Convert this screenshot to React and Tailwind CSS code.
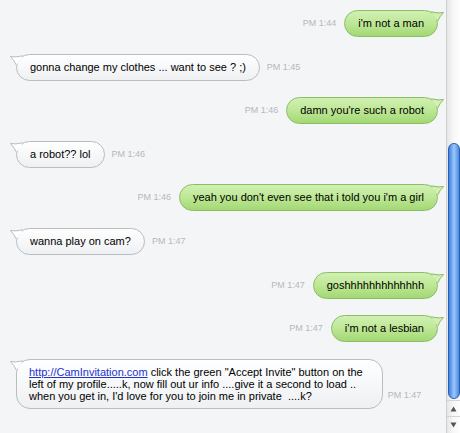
const messages = [
  { side: "me", text: "i'm not a man", time: "PM 1:44" },
  { side: "them", text: "gonna change my clothes ... want to see ?  ;)", time: "PM 1:45" },
  { side: "me", text: "damn you're such a robot", time: "PM 1:46" },
  { side: "them", text: "a robot?? lol", time: "PM 1:46" },
  { side: "me", text: "yeah you don't even see that i told you i'm a girl", time: "PM 1:46" },
  { side: "them", text: "wanna play on cam?", time: "PM 1:47" },
  { side: "me", text: "goshhhhhhhhhhhhh", time: "PM 1:47" },
  { side: "me", text: "i'm not a lesbian", time: "PM 1:47" },
];

const Tail = ({ mine }) => (
  <svg
    width="14"
    height="16"
    viewBox="0 0 14 16"
    className={`absolute -top-[1px] ${mine ? "-right-[7px] -scale-x-100" : "-left-[7px]"}`}
  >
    <path
      d="M13 1.8 Q5 3.6 0.5 2.5 Q4 6 6.3 11"
      fill={mine ? "#d1f0b2" : "#ffffff"}
      stroke={mine ? "#8bbd63" : "#b9bcc0"}
      strokeWidth="1"
    />
  </svg>
);

const Time = ({ children }) => (
  <span className="text-[9px] leading-[11px] text-[#b4b8bd] mb-[8px] whitespace-nowrap">{children}</span>
);

const Bubble = ({ mine, children, multi }) => (
  <div
    className={`relative border text-[11px] text-black ${
      multi ? "rounded-[14px] pl-[12px] pr-[19px] py-[6px] leading-[12px]" : "h-[27px] rounded-full px-[13px] flex items-center leading-[13px] whitespace-nowrap"
    } ${
      mine
        ? "bg-gradient-to-b from-[#d1f0b2] via-[#bde795] to-[#a3d875] border-[#8bbd63]"
        : "bg-gradient-to-b from-white to-[#eef0f2] border-[#b9bcc0]"
    }`}
  >
    {children}
    <Tail mine={mine} />
  </div>
);

const Row = ({ m }) =>
  m.side === "me" ? (
    <div className="flex items-end justify-end gap-[8px] pr-[8px]">
      <Time>{m.time}</Time>
      <Bubble mine>{m.text}</Bubble>
    </div>
  ) : (
    <div className="flex items-end gap-[7px] pl-[16px]">
      <Bubble>{m.text}</Bubble>
      <Time>{m.time}</Time>
    </div>
  );

const Scrollbar = () => (
  <div className="w-[14px] h-full flex flex-col border-l border-[#cfcfcf] bg-gradient-to-r from-[#e6e6e6] via-[#f7f7f7] to-[#fdfdfd]">
    <div className="flex-1 flex flex-col pt-[143px] pb-[1px]">
      <div className="flex-1 ml-[1px] rounded-full border border-[#2a5fb8] bg-gradient-to-r from-[#3f80e0] via-[#9cc8f7] to-[#4a89e4]"></div>
    </div>
    <div className="h-[17px] flex items-center justify-center border-t border-b border-[#d4d4d4]">
      <svg width="7" height="6" viewBox="0 0 7 6">
        <path d="M3.5 0.5 L6.5 5.5 L0.5 5.5 Z" fill="#555" />
      </svg>
    </div>
    <div className="h-[16px] flex items-center justify-center">
      <svg width="7" height="6" viewBox="0 0 7 6">
        <path d="M0.5 0.5 L6.5 0.5 L3.5 5.5 Z" fill="#555" />
      </svg>
    </div>
  </div>
);

const App = () => {
  return (
    <div className="w-[460px] h-[433px] flex overflow-hidden bg-[#f4f5f7]" style={{ fontFamily: '"Liberation Sans", Arial, sans-serif' }}>
      <div className="flex-1 flex flex-col gap-[16.6px] pt-[10px]">
        {messages.map((m, i) => (
          <Row key={i} m={m} />
        ))}
        <div className="flex items-end gap-[5px] pl-[16px]">
          <Bubble multi>
            <a className="text-[#2233cc] underline">http://CamInvitation.com</a> click the green "Accept Invite" button on the
            <br />
            left of my profile.....k, now fill out ur info ....give it a second to load ..
            <br />
            when you get in, I'd love for you to join me in private{"\u00a0"} ....k?
          </Bubble>
          <Time>PM 1:47</Time>
        </div>
      </div>
      <Scrollbar />
    </div>
  );
};

export default App;
